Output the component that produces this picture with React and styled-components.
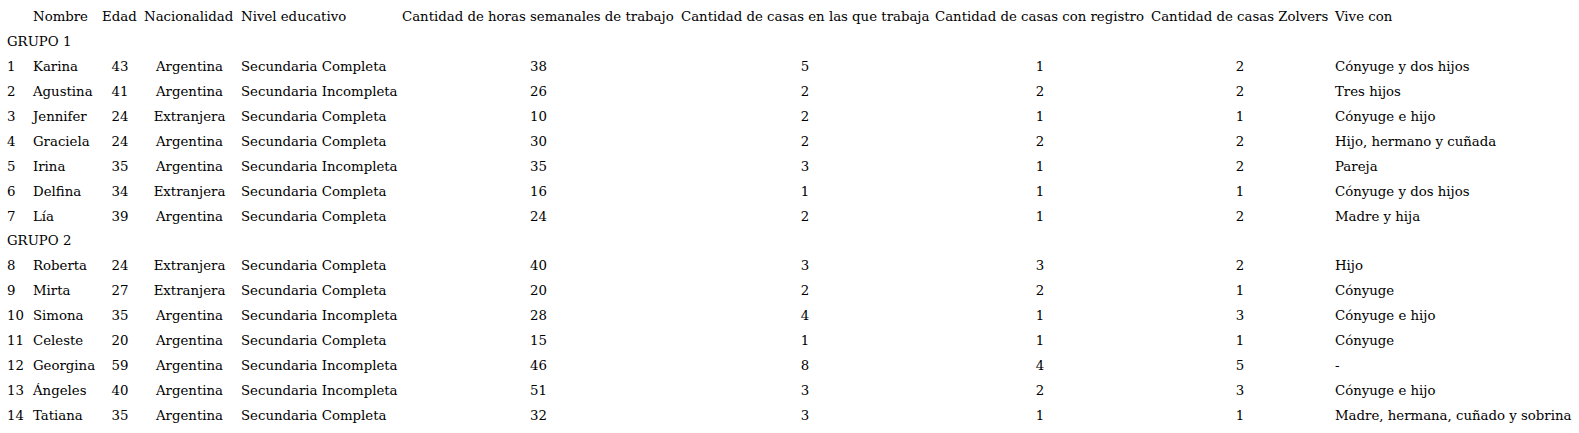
import React from "react";
import styled, { createGlobalStyle } from "styled-components";

const GlobalStyle = createGlobalStyle`
  body {
    margin: 0;
    background: #ffffff;
    color: #000000;
    font-family: "DejaVu Serif", "Liberation Serif", serif;
  }
`;

const columns = [
  { label: "", width: 20 },
  { label: "Nombre", width: 63 },
  { label: "Edad", width: 36, center: true },
  { label: "Nacionalidad", width: 91, center: true },
  { label: "Nivel educativo", width: 155 },
  { label: "Cantidad de horas semanales de trabajo", width: 273, center: true },
  { label: "Cantidad de casas en las que trabaja", width: 248, center: true },
  { label: "Cantidad de casas con registro", width: 210, center: true },
  { label: "Cantidad de casas Zolvers", width: 178, center: true },
  { label: "Vive con", width: 240 },
];

const groups = [
  {
    name: "GRUPO 1",
    rows: [
      [1, "Karina", 43, "Argentina", "Secundaria Completa", 38, 5, 1, 2, "Cónyuge y dos hijos"],
      [2, "Agustina", 41, "Argentina", "Secundaria Incompleta", 26, 2, 2, 2, "Tres hijos"],
      [3, "Jennifer", 24, "Extranjera", "Secundaria Completa", 10, 2, 1, 1, "Cónyuge e hijo"],
      [4, "Graciela", 24, "Argentina", "Secundaria Completa", 30, 2, 2, 2, "Hijo, hermano y cuñada"],
      [5, "Irina", 35, "Argentina", "Secundaria Incompleta", 35, 3, 1, 2, "Pareja"],
      [6, "Delfina", 34, "Extranjera", "Secundaria Completa", 16, 1, 1, 1, "Cónyuge y dos hijos"],
      [7, "Lía", 39, "Argentina", "Secundaria Completa", 24, 2, 1, 2, "Madre y hija"],
    ],
  },
  {
    name: "GRUPO 2",
    rows: [
      [8, "Roberta", 24, "Extranjera", "Secundaria Completa", 40, 3, 3, 2, "Hijo"],
      [9, "Mirta", 27, "Extranjera", "Secundaria Completa", 20, 2, 2, 1, "Cónyuge"],
      [10, "Simona", 35, "Argentina", "Secundaria Incompleta", 28, 4, 1, 3, "Cónyuge e hijo"],
      [11, "Celeste", 20, "Argentina", "Secundaria Completa", 15, 1, 1, 1, "Cónyuge"],
      [12, "Georgina", 59, "Argentina", "Secundaria Incompleta", 46, 8, 4, 5, "-"],
      [13, "Ángeles", 40, "Argentina", "Secundaria Incompleta", 51, 3, 2, 3, "Cónyuge e hijo"],
      [14, "Tatiana", 35, "Argentina", "Secundaria Completa", 32, 3, 1, 1, "Madre, hermana, cuñado y sobrina"],
    ],
  },
];

const App = () => {
  return (
    <>
      <GlobalStyle />
      <Table>
        {columns.map((col, i) => (
          <HeaderCell key={i}>{col.label}</HeaderCell>
        ))}
        {groups.map((group) => (
          <React.Fragment key={group.name}>
            <GroupCell>{group.name}</GroupCell>
            {group.rows.map((row) =>
              row.map((value, i) => (
                <Cell key={`${row[0]}-${i}`} $center={columns[i].center}>
                  {value}
                </Cell>
              ))
            )}
          </React.Fragment>
        ))}
      </Table>
    </>
  );
};

const Table = styled.div`
  display: grid;
  grid-template-columns: ${columns.map((c) => `${c.width}px`).join(" ")};
  grid-auto-rows: 24.95px;
  column-gap: 6px;
  padding: 5px 0 0 7px;
  font-size: 13.3px;
  line-height: 24.95px;
`;

const HeaderCell = styled.div`
  white-space: nowrap;
  text-align: left;
`;

const Cell = styled.div`
  white-space: nowrap;
  text-align: ${({ $center }) => ($center ? "center" : "left")};
`;

const GroupCell = styled.div`
  grid-column: 1 / -1;
  white-space: nowrap;
`;

export default App;
